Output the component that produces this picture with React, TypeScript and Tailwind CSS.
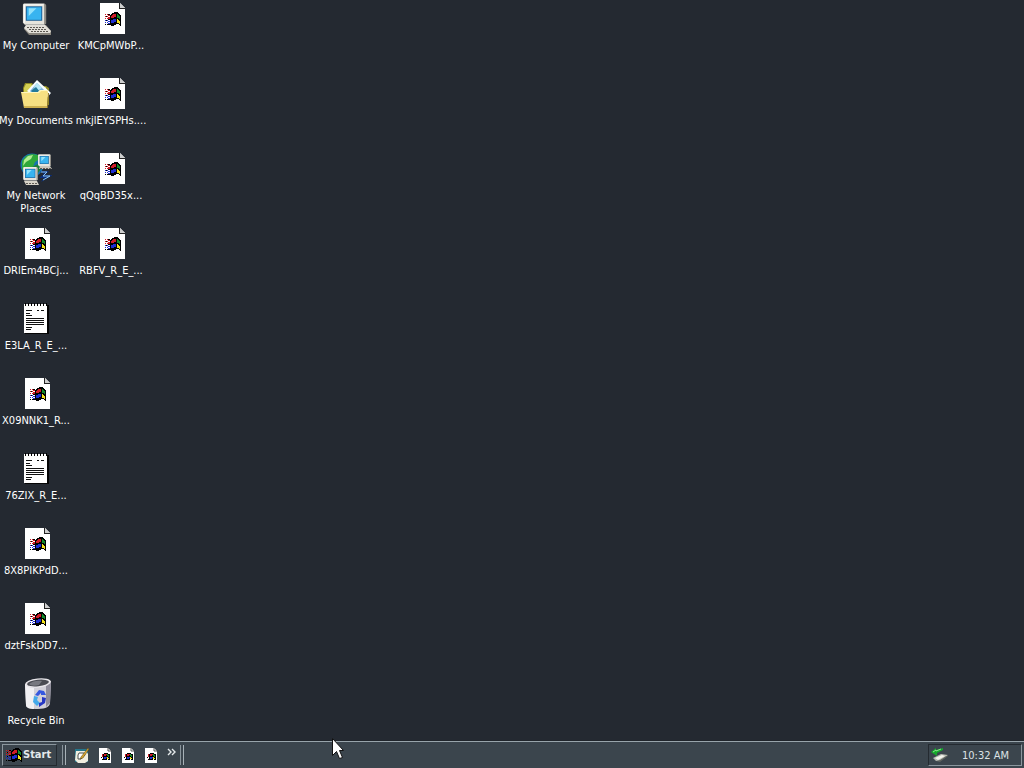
import type { ReactNode } from "react";

type Kind = "computer" | "documents" | "network" | "app" | "note" | "bin";

type DesktopItem = {
  label: string;
  kind: Kind;
};

const items: DesktopItem[] = [
  { label: "My Computer", kind: "computer" },
  { label: "My Documents", kind: "documents" },
  { label: "My Network Places", kind: "network" },
  { label: "DRlEm4BCj...", kind: "app" },
  { label: "E3LA_R_E_...", kind: "note" },
  { label: "X09NNK1_R...", kind: "app" },
  { label: "76ZIX_R_E...", kind: "note" },
  { label: "8X8PIKPdD...", kind: "app" },
  { label: "dztFskDD7...", kind: "app" },
  { label: "Recycle Bin", kind: "bin" },
  { label: "KMCpMWbP...", kind: "app" },
  { label: "mkjlEYSPHs....", kind: "app" },
  { label: "qQqBD35x...", kind: "app" },
  { label: "RBFV_R_E_...", kind: "app" },
];

// 16x16 waving flag with its dotted tail
function FlagShape() {
  return (
    <g shapeRendering="crispEdges">
      <path
        d="M6 3h1V2h2V1h4v1h1v1h1v1h1v11h-1v-1h-1v-1h-3v1H9v1H6v-1H5V4h1z"
        fill="#000"
      />
      <path d="M7 4h1V3h3v3H9v1H6V5h1z" fill="#d01c28" />
      <path d="M12 3h1v1h1v1h1v3h-1V7h-2z" fill="#128a2a" />
      <path d="M6 9h2V8h3v3H9v1H6z" fill="#1c2ed2" />
      <path d="M12 8h1v1h1v1h1v3h-1v-1h-2z" fill="#f2e21c" />
      <path
        d="M0 3h1v1H0zM2 3h1v1H2zM0 5h1v1H0zM2 5h1v1H2zM3 4h2v1H3zM0 7h1v1H0zM2 7h1v1H2zM3 6h2v2H3z"
        fill="#d01c28"
      />
      <path
        d="M0 9h1v1H0zM2 9h1v1H2zM3 10h2v1H3zM0 11h1v1H0zM2 11h1v1H2zM3 12h2v1H3z"
        fill="#1c2ed2"
      />
      <path
        d="M3 3h2v1H3zM1 5h1v1H1zM3 8h2v1H3zM1 9h1v1H1zM0 13h1v1H0zM2 13h3v1H2z"
        fill="#000"
      />
    </g>
  );
}

function Monitor() {
  return (
    <>
      <path d="M3 0h21l2 2v19l-2 1H4l-2-2V1z" fill="#e6e4dc" />
      <path d="M24 0l2 2v19l-2 1z" fill="#8b8880" />
      <path d="M3 1h20v1H4v18H3z" fill="#fff" />
      <path d="M5 3h17v15H5z" fill="#1b5f96" />
      <path d="M6 4h15v13H6z" fill="#38b4f0" />
      <path d="M8 5h8L8 13z" fill="#93e2fb" />
    </>
  );
}

function Computer() {
  return (
    <>
      <path d="M6 22h20l5 6v4H9l-5-6z" fill="#8a867e" />
      <path d="M6 22h19l6 6-1 2H9l-5-5z" fill="#e2dfd8" />
      <path
        d="M7 24.5h17M9 26.5h18M11 28.5h18"
        stroke="#5c5852"
        strokeDasharray="2 1"
      />
      <svg x="1" y="0" width="27" height="23" viewBox="0 0 28 23">
        <Monitor />
      </svg>
    </>
  );
}

function Documents() {
  return (
    <>
      <path d="M3 10l2-5h7l2 3h12l3 2v17H4z" fill="#8f8a24" />
      <path d="M4 10l2-4h5l2 3h13v10H4z" fill="#d3cf52" />
      <path d="M17 2l14 13-8 9L7 13z" fill="#f7fcff" />
      <path d="M17 5l9 9-7 8-9-9z" fill="#7fb3dc" />
      <path d="M17 5l5 5-5 3-3-4z" fill="#b9e7f7" />
      <path d="M11 13l5-4 4 5 4-2 2 3-7 4z" fill="#237a9a" />
      <path d="M1 14h17l2-2h7l1 2-1 16H4z" fill="#f6e082" />
      <path d="M1 14h17l2-2h7v1h-6l-2 2H2z" fill="#fff7bd" />
      <path d="M4 28h23v2H4z" fill="#cdb04f" />
      <path d="M28 15h1l-1 15h-1z" fill="#90762e" />
    </>
  );
}

function Network() {
  return (
    <>
      <circle cx="12" cy="12" r="11.5" fill="#1672b0" />
      <path d="M2 8l4-5 6-2 6 1 2 4-5 3-2 5-5 1-2 5-4-4z" fill="#2fa83a" />
      <path d="M8 3l5-1-2 4-5 3-3 4 1-6z" fill="#b1ec91" />
      <path d="M12 14l6-3 3 5-4 5-5-1z" fill="#1e7f37" />
      <svg x="17" y="1" width="15" height="13" viewBox="0 0 28 23">
        <Monitor />
      </svg>
      <path d="M20 13h10l2 3H19z" fill="#c9c6bd" />
      <path d="M20 15.5h11" stroke="#5e5a54" strokeDasharray="2 1" />
      <svg x="2" y="14" width="17" height="14" viewBox="0 0 28 23">
        <Monitor />
      </svg>
      <path d="M4 28h13l2 4H6z" fill="#d8d4c9" />
      <path d="M6 30.5h12" stroke="#635e58" strokeDasharray="2 1" />
      <path d="M20 18h9l-4 4h8l-12 7 3-4h-5l5-4z" fill="#0b2f7e" />
      <path d="M21 19h6l-4 4h7l-7 4" fill="none" stroke="#8cc4ee" />
    </>
  );
}

function AppFile() {
  return (
    <>
      <path d="M5 0h20l5 5v26H5z" fill="#fff" />
      <path d="M25 0l5 5h-5z" fill="#cfcfcf" />
      <path d="M24 0h1v5h5v1h-6z" fill="#222" />
      <svg x="10" y="8" width="16" height="16" viewBox="0 0 16 16">
        <FlagShape />
      </svg>
    </>
  );
}

function Note() {
  return (
    <g shapeRendering="crispEdges">
      <path d="M5 2h24v29H5z" fill="#050505" />
      <path d="M4 1h23v29H4z" fill="#fff" />
      <path
        d="M5 0h1v3H5zM8 0h1v3H8zM11 0h1v3h-1zM14 0h1v3h-1zM17 0h1v3h-1zM20 0h1v3h-1zM23 0h1v3h-1zM26 0h1v3h-1z"
        fill="#000"
      />
      <path
        d="M6 7h6v1H6zM17 7h2v1h-2zM21 7h3v1h-3zM6 10h4v1H6zM6 12h6v1H6zM6 15h18v1H6zM6 17h18v1H6zM6 19h18v1H6zM6 21h18v1H6zM6 24h6v1H6zM6 26h5v1H6z"
        fill="#111"
      />
    </g>
  );
}

function Bin() {
  return (
    <>
      <path d="M5 6l26-3-1 22c0 3-4 6-12 6-7 0-12-1-12-4z" fill="#d2d0d8" />
      <path d="M5 6c3 3 6 4 9 4v21c-4 0-8-1-8-4z" fill="#f1f0f3" />
      <path d="M26 8l5-5-1 22-4 4z" fill="#8f8c9a" />
      <ellipse cx="18" cy="5" rx="13" ry="4.5" transform="rotate(-6 18 5)" fill="#e8e6ea" />
      <ellipse cx="18" cy="5" rx="11" ry="3.2" transform="rotate(-6 18 5)" fill="#4a4b52" />
      <path d="M9 6c3-3 9-4 13-3l-3 4c-4 1-8 1-10-1z" fill="#77787f" />
      <path d="M15 17l4-5 5 1 2 4h-5v-2l-3 3z" fill="#3557e0" />
      <path d="M14 18l4 1-1 3 3 3-3 3-4-4z" fill="#43a9ea" />
      <path d="M22 19l4 1-1 5-6 4v-4l3-1z" fill="#2536c4" />
    </>
  );
}

const glyphs: Record<Kind, ReactNode> = {
  computer: <Computer />,
  documents: <Documents />,
  network: <Network />,
  app: <AppFile />,
  note: <Note />,
  bin: <Bin />,
};

function DesktopIcon({ item }: { item: DesktopItem }) {
  return (
    <button type="button" className="flex flex-col items-center gap-1 pt-[3px]">
      <svg viewBox="0 0 32 32" className="h-8 w-8 shrink-0" aria-hidden="true">
        {glyphs[item.kind]}
      </svg>
      <span className="-mx-1 text-center text-[11px] leading-[13px]">
        {item.label}
      </span>
    </button>
  );
}

function Divider() {
  return (
    <span className="flex h-5 gap-0.5" aria-hidden="true">
      <span className="w-px bg-[#89949b]" />
      <span className="w-px bg-[#a7b1b7]" />
    </span>
  );
}

function QuickFile() {
  return (
    <svg viewBox="0 0 16 16" className="h-4 w-4" aria-hidden="true">
      <path d="M2 1h9l3 3v12H2z" fill="#fff" />
      <path d="M11 1v3h3" fill="none" stroke="#555" />
      <svg x="3" y="5" width="10" height="9" viewBox="0 0 16 16">
        <FlagShape />
      </svg>
    </svg>
  );
}

function Taskbar() {
  return (
    <footer className="flex h-7 items-center border-t border-[#20252b] bg-[#3b454d] shadow-[inset_0_1px_0_#98a4ab]">
      <button
        type="button"
        className="mt-px ml-0.5 flex h-[22px] w-[55px] items-center gap-px border border-t-[#8b969d] border-r-[#242a30] border-b-[#242a30] border-l-[#8b969d] pl-[3px] text-[11px] font-bold text-[#e4e9eb]"
      >
        <svg viewBox="0 0 16 16" className="h-4 w-4" aria-hidden="true">
          <FlagShape />
        </svg>
        Start
      </button>
      <div className="mt-px ml-[5px] flex items-center">
        <Divider />
        <nav
          aria-label="Quick Launch"
          className="ml-2 flex items-center gap-[7px]"
        >
          <button type="button" aria-label="Show Desktop">
            <svg viewBox="0 0 16 16" className="h-4 w-4" aria-hidden="true">
              <path d="M1 2h13v13H1z" fill="#26778c" />
              <path d="M2 4h10l2 3v7l-3 2H4l-3-3z" fill="#f1eee0" />
              <path d="M5 6h5l1 2-4 4H4V8z" fill="#fff" stroke="#4b514d" />
              <path
                d="M7 10l7-9 1 1-6 9-3 1z"
                fill="#d9a52c"
                stroke="#49401e"
                strokeWidth=".5"
              />
            </svg>
          </button>
          {["first", "second", "third"].map((name) => (
            <button
              key={name}
              type="button"
              aria-label={`Open ${name} program`}
            >
              <QuickFile />
            </button>
          ))}
        </nav>
        <button type="button" aria-label="More" className="mr-1 mb-1.5 ml-2">
          <svg viewBox="0 0 9 8" className="h-2 w-[9px]" aria-hidden="true">
            <path
              d="M1 1l3 3-3 3M5 1l3 3-3 3"
              fill="none"
              stroke="#e4e9eb"
              strokeWidth="1.4"
            />
          </svg>
        </button>
        <Divider />
      </div>
      <div className="mt-px mr-0.5 ml-auto flex h-[22px] items-center gap-[13px] border border-t-[#242a30] border-r-[#8b969d] border-b-[#8b969d] border-l-[#242a30] pr-3 pl-0.5">
        <svg viewBox="0 0 18 16" className="h-4 w-[18px]" aria-hidden="true">
          <path d="M2 11l8-4 7 1-8 6H5z" fill="#b7bbb4" />
          <path d="M4 11l7-3 3 1-7 4z" fill="#f3f4ed" />
          <path d="M5 14l4 1 8-6v-1l-8 5z" fill="#5f645f" />
          <path d="M0 5l5-4v2l7-2v2L6 6v3z" fill="#16a82c" />
          <path d="M2 5l3-2v1l5-2" fill="none" stroke="#89e78a" />
        </svg>
        <time className="text-[11px] leading-[13px] text-[#dce2e5]">
          10:32 AM
        </time>
      </div>
    </footer>
  );
}

export default function App() {
  return (
    <div className="relative flex min-h-screen flex-col bg-[#242931] font-['DejaVu_Sans_Condensed','DejaVu_Sans',sans-serif] text-white">
      <main className="grid flex-1 grid-flow-col grid-cols-[72px_72px] grid-rows-[repeat(10,65px)] content-start gap-x-[3px] gap-y-2.5">
        {items.map((item) => (
          <DesktopIcon key={item.label} item={item} />
        ))}
      </main>
      <Taskbar />
      <svg
        viewBox="0 0 12 21"
        className="pointer-events-none absolute bottom-[9px] left-[332px] h-[21px] w-3"
        aria-hidden="true"
      >
        <path d="M.5.5v17l4-4 3 7 3-1-3-7h4z" fill="#fff" stroke="#111" />
      </svg>
    </div>
  );
}
